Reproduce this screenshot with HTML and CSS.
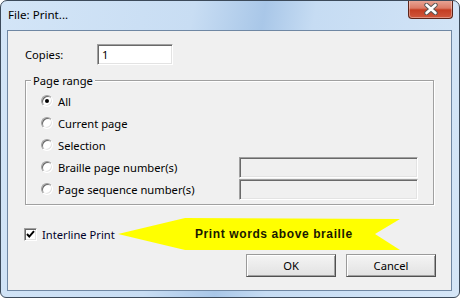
FILE: index.html
```html
<!DOCTYPE html>
<html>
<head>
<meta charset="utf-8">
<link rel="stylesheet" href="styles.css">
</head>
<body>
<div class="window">
  <div class="titlebar">
    <span class="title">File: Print...</span>
    <div class="close">
      <svg width="18" height="12" viewBox="0 0 18 12"><path d="M4.5 2 L13.5 10 M13.5 2 L4.5 10" stroke="#555" stroke-width="4.4" stroke-linecap="round" fill="none"/><path d="M4.5 2 L13.5 10 M13.5 2 L4.5 10" stroke="#fff" stroke-width="2.6" stroke-linecap="round" fill="none"/></svg>
    </div>
  </div>
  <div class="client">
    <div class="copies-row">
      <span class="copies-label">Copies:</span>
      <div class="field field-white">1</div>
    </div>
    <div class="group">
      <span class="legend">Page range</span>
      <div class="opt"><span class="radio checked"></span><span class="opt-label">All</span></div>
      <div class="opt"><span class="radio"></span><span class="opt-label">Current page</span></div>
      <div class="opt"><span class="radio"></span><span class="opt-label">Selection</span></div>
      <div class="opt"><span class="radio"></span><span class="opt-label">Braille page number(s)</span><div class="field field-disabled"></div></div>
      <div class="opt"><span class="radio"></span><span class="opt-label">Page sequence number(s)</span><div class="field field-disabled"></div></div>
    </div>
    <div class="check-row">
      <span class="checkbox"><svg width="11" height="11" viewBox="0 0 11 11"><path d="M2 5 L4.3 7.6 L9 2.2" stroke="#000" stroke-width="2" fill="none"/></svg></span>
      <span class="cb-label">Interline Print</span>
      <div class="callout">Print words above braille</div>
    </div>
    <div class="buttons">
      <div class="btn">OK</div>
      <div class="btn">Cancel</div>
    </div>
  </div>
</div>
</body>
</html>
```

FILE: styles.css
```css
html, body {
  margin: 0;
  padding: 0;
  background: #ffffff;
}
body {
  font-family: "Noto Sans", "Open Sans", sans-serif;
  font-size: 11.2px;
  color: #000;
  white-space: nowrap;
}
.window {
  width: 460px;
  height: 298px;
  box-sizing: border-box;
  border: 1px solid #3c4a5a;
  border-radius: 7px 7px 6px 6px;
  background: linear-gradient(100deg, #d3e5f7 0%, #c8ddf3 38%, #a9c7e8 52%, #c6dcf3 62%, #d5e6f7 100%);
  display: flex;
  flex-direction: column;
  padding: 0 7px 6px 6px;
  overflow: hidden;
}
.titlebar {
  height: 29px;
  display: flex;
  align-items: flex-start;
  flex-shrink: 0;
}
.title {
  margin-top: 6px;
  margin-left: 1px;
  line-height: 16px;
  font-size: 11.6px;
  color: #000;
}
.close {
  margin-left: auto;
  margin-top: -1px;
  margin-right: -1px;
  width: 45px;
  height: 19px;
  box-sizing: border-box;
  border: 1px solid #5c2419;
  border-top: none;
  border-radius: 0 0 4px 4px;
  background: linear-gradient(#e9a899 0%, #dc7b66 45%, #c43d22 55%, #d0573c 100%);
  box-shadow: inset 0 0 0 1px rgba(255,255,255,0.35);
  display: flex;
  align-items: center;
  justify-content: center;
}
.client {
  flex: 1;
  border: 1px solid #6f87a3;
  background: #f0f0f0;
  display: flex;
  flex-direction: column;
  padding: 0 17px 0 17px;
}
.copies-row {
  display: flex;
  align-items: center;
  margin-top: 13px;
  height: 21px;
}
.copies-label {
  width: 72px;
}
.field {
  box-sizing: border-box;
  height: 21px;
  border: 1px solid;
  border-color: #a0a0a0 #ffffff #ffffff #a0a0a0;
  box-shadow: inset 1px 1px 0 #696969, inset -1px -1px 0 #e3e3e3;
}
.field-white {
  width: 76px;
  background: #fff;
  padding-left: 4px;
  line-height: 19px;
}
.field-disabled {
  width: 179px;
  margin-left: auto;
  background: #f0f0f0;
}
.group {
  margin-top: 15px;
  height: 125px;
  box-sizing: border-box;
  border: 1px solid #a0a0a0;
  box-shadow: 1px 1px 0 #fff, inset 1px 1px 0 #fff;
  display: flex;
  flex-direction: column;
  padding: 0 15px 0 15px;
}
.legend {
  align-self: flex-start;
  margin-top: -9px;
  margin-left: -10px;
  padding: 0 2px;
  background: #f0f0f0;
  line-height: 17px;
}
.opt {
  display: flex;
  align-items: center;
  height: 22px;
}
.opt:first-of-type {
  margin-top: 1px;
}
.radio {
  width: 12px;
  height: 12px;
  box-sizing: border-box;
  border-radius: 50%;
  border: 1px solid;
  border-color: #a0a0a0 #ffffff #ffffff #a0a0a0;
  box-shadow: inset 1px 1px 0 #696969, inset -1px -1px 0 #e3e3e3;
  background: #fff;
  display: flex;
  align-items: center;
  justify-content: center;
  flex-shrink: 0;
}
.radio.checked::after {
  content: "";
  width: 4px;
  height: 4px;
  border-radius: 50%;
  background: #000;
}
.opt-label {
  margin-left: 5px;
}
.check-row {
  display: flex;
  align-items: center;
  margin-top: 13px;
  height: 32px;
}
.checkbox {
  margin-left: -1px;
  width: 13px;
  height: 13px;
  box-sizing: border-box;
  border: 1px solid;
  border-color: #a0a0a0 #ffffff #ffffff #a0a0a0;
  box-shadow: inset 1px 1px 0 #696969, inset -1px -1px 0 #e3e3e3;
  background: #fff;
  display: flex;
  align-items: center;
  justify-content: center;
  flex-shrink: 0;
}
.cb-label {
  margin-left: 5px;
  width: 76px;
  flex-shrink: 0;
  color: #00002a;
}
.callout {
  width: 282px;
  height: 32px;
  flex-shrink: 0;
  background: #ffff00;
  clip-path: polygon(0 16px, 67px 0, 282px 1px, 257px 16px, 282px 32px, 67px 32px);
  display: flex;
  align-items: center;
  padding-left: 77px;
  box-sizing: border-box;
  font-family: "Liberation Sans", Arial, sans-serif;
  font-weight: bold;
  font-size: 12px;
  letter-spacing: 0.6px;
  color: #1a1a00;
}
.buttons {
  display: flex;
  justify-content: flex-end;
  gap: 10px;
  margin-top: 4px;
  margin-right: -2px;
}
.btn {
  width: 90px;
  height: 23px;
  box-sizing: border-box;
  border: 1px solid;
  border-color: #9a9a9a #505050 #505050 #9a9a9a;
  box-shadow: inset 1px 1px 0 #fff, inset -1px -1px 0 #a0a0a0;
  background: linear-gradient(#f4f4f4, #e2e2e2);
  display: flex;
  align-items: center;
  justify-content: center;
}
```
